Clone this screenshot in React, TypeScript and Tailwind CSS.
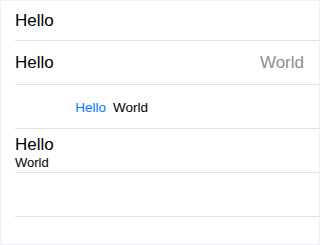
export default function App() {
  return (
    <div className="w-[320px] h-[245px] bg-white border border-[#efeff4] overflow-hidden font-['Liberation_Sans',Arial,sans-serif] text-black">
      <div className="pl-[14px]">
        {/* basic */}
        <div className="h-[40px] flex items-center border-b border-[#e0e0e0] text-[17px] pr-[15px]">
          Hello
        </div>
        {/* right detail */}
        <div className="h-[44px] flex items-center justify-between border-b border-[#e0e0e0] text-[17px] pr-[15px]">
          <span>Hello</span>
          <span className="text-[#8e8e93]">World</span>
        </div>
        {/* left detail */}
        <div className="h-[44px] flex items-center border-b border-[#e0e0e0] text-[13.5px] pt-[3px] pr-[15px]">
          <span className="w-[91px] text-right text-[#007aff]">Hello</span>
          <span className="ml-[7px]">World</span>
        </div>
        {/* subtitle */}
        <div className="h-[44px] flex flex-col pt-[6px] border-b border-[#e0e0e0] pr-[15px]">
          <span className="text-[17px] leading-[20px]">Hello</span>
          <span className="text-[13px] leading-[16px]">World</span>
        </div>
        <div className="h-[44px] border-b border-[#e0e0e0]" />
      </div>
    </div>
  );
}
